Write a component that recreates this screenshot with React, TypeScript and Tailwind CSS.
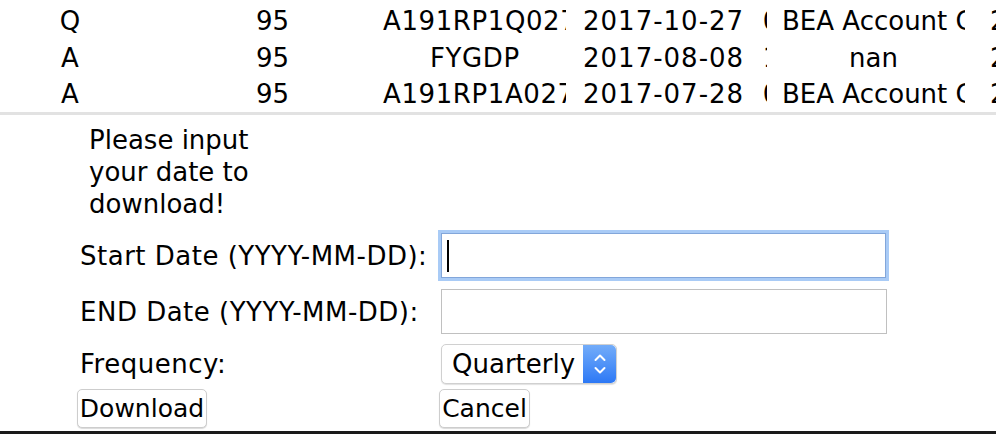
const rows = [
  {
    freq: 'Q',
    id: 'A191RP1Q027SBEA',
    idPad: 'pl-[3px]',
    day: '2017-10-27',
    time: '07:51:03',
    note: 'BEA Account Code: A191RP',
    notePad: 'pl-[15px]',
    h: 'h-[38px]',
  },
  {
    freq: 'A',
    id: 'FYGDP',
    idPad: 'pl-[50px]',
    day: '2017-08-08',
    time: '14:02:11',
    note: 'nan',
    notePad: 'pl-[82px]',
    h: 'h-[36px]',
  },
  {
    freq: 'A',
    id: 'A191RP1A027NBEA',
    idPad: 'pl-[3px]',
    day: '2017-07-28',
    time: '07:51:02',
    note: 'BEA Account Code: A191RP',
    notePad: 'pl-[15px]',
    h: 'h-[36px]',
  },
]

function Chevrons() {
  return (
    <svg width="14" height="28" viewBox="0 0 14 28" fill="none">
      <path d="M2.5 10 L7 5.5 L11.5 10" stroke="white" strokeWidth="2" strokeLinecap="round" strokeLinejoin="round" />
      <path d="M2.5 18 L7 22.5 L11.5 18" stroke="white" strokeWidth="2" strokeLinecap="round" strokeLinejoin="round" />
    </svg>
  )
}

export default function App() {
  return (
    <div className="w-[996px] h-[434px] overflow-hidden bg-white text-black font-['DejaVu_Sans',sans-serif] text-[26px] leading-none">
      {/* data table (scrolled) */}
      <div className="pt-[2px]">
        {rows.map((r, i) => (
          <div key={i} className={`flex items-center whitespace-nowrap ${r.h}`}>
            <div className="w-[140px] text-center">{r.freq}</div>
            <div className="w-[240px] pl-[116px] overflow-hidden">95</div>
            <div className={`w-[186px] overflow-hidden tracking-[0.6px] ${r.idPad}`}>{r.id}</div>
            <div className="w-[201px] pl-[17px] overflow-hidden whitespace-pre tracking-[1px]">
              {`${r.day}  ${r.time}`}
            </div>
            <div className={`w-[198px] overflow-hidden ${r.notePad}`}>{r.note}</div>
            <div className="flex-1 pl-[25px] overflow-hidden">2018-01-26</div>
          </div>
        ))}
      </div>
      <div className="h-[3px] bg-[#e2e2e2]" />

      {/* download form */}
      <div className="pt-[9px] pl-[77px]">
        <div className="pl-[12px] leading-[32px]">
          Please input
          <br />
          your date to
          <br />
          download!
        </div>

        <div className="mt-[13px] flex items-center h-[45px] tracking-[0.5px]">
          <div className="w-[364px] pl-[3px]">Start Date (YYYY-MM-DD):</div>
          <div className="w-[445px] h-[45px] flex items-center pl-[5px] border border-[#82a6da] shadow-[0_0_0_3px_#a9cbf6]">
            <span className="w-[2px] h-[32px] bg-black" />
          </div>
        </div>

        <div className="mt-[11px] flex items-center h-[45px] tracking-[0.5px]">
          <div className="w-[364px] pl-[3px]">END Date (YYYY-MM-DD):</div>
          <div className="w-[446px] h-[45px] border border-[#c0c0c0] bg-white" />
        </div>

        <div className="mt-[10px] flex items-center h-[40px]">
          <div className="w-[364px] pl-[3px] tracking-[0.5px]">Frequency:</div>
          <div className="w-[176px] h-[40px] flex items-stretch rounded-[5px] border border-[#d0d0d0] bg-white shadow-[0_1px_1px_rgba(0,0,0,0.12)]">
            <div className="flex-1 flex items-center pl-[10px]">Quarterly</div>
            <div className="w-[33px] flex items-center justify-center rounded-r-[5px] bg-gradient-to-b from-[#73acf9] to-[#2c78f5]">
              <Chevrons />
            </div>
          </div>
        </div>

        <div className="mt-[5px] flex items-center h-[39px]">
          <div className="w-[362px]">
            <button className="w-[130px] h-[39px] flex items-center justify-center rounded-[5px] border border-[#cdcdcd] bg-white shadow-[0_1px_1px_rgba(0,0,0,0.15)] text-[25px]">
              Download
            </button>
          </div>
          <button className="w-[91px] h-[39px] flex items-center justify-center rounded-[5px] border border-[#cdcdcd] bg-white shadow-[0_1px_1px_rgba(0,0,0,0.15)] text-[25px]">
            Cancel
          </button>
        </div>
      </div>

      {/* terminal strip below the window */}
      <div className="mt-[3px] h-[3px] bg-[#1a1a1a]" />
    </div>
  )
}
